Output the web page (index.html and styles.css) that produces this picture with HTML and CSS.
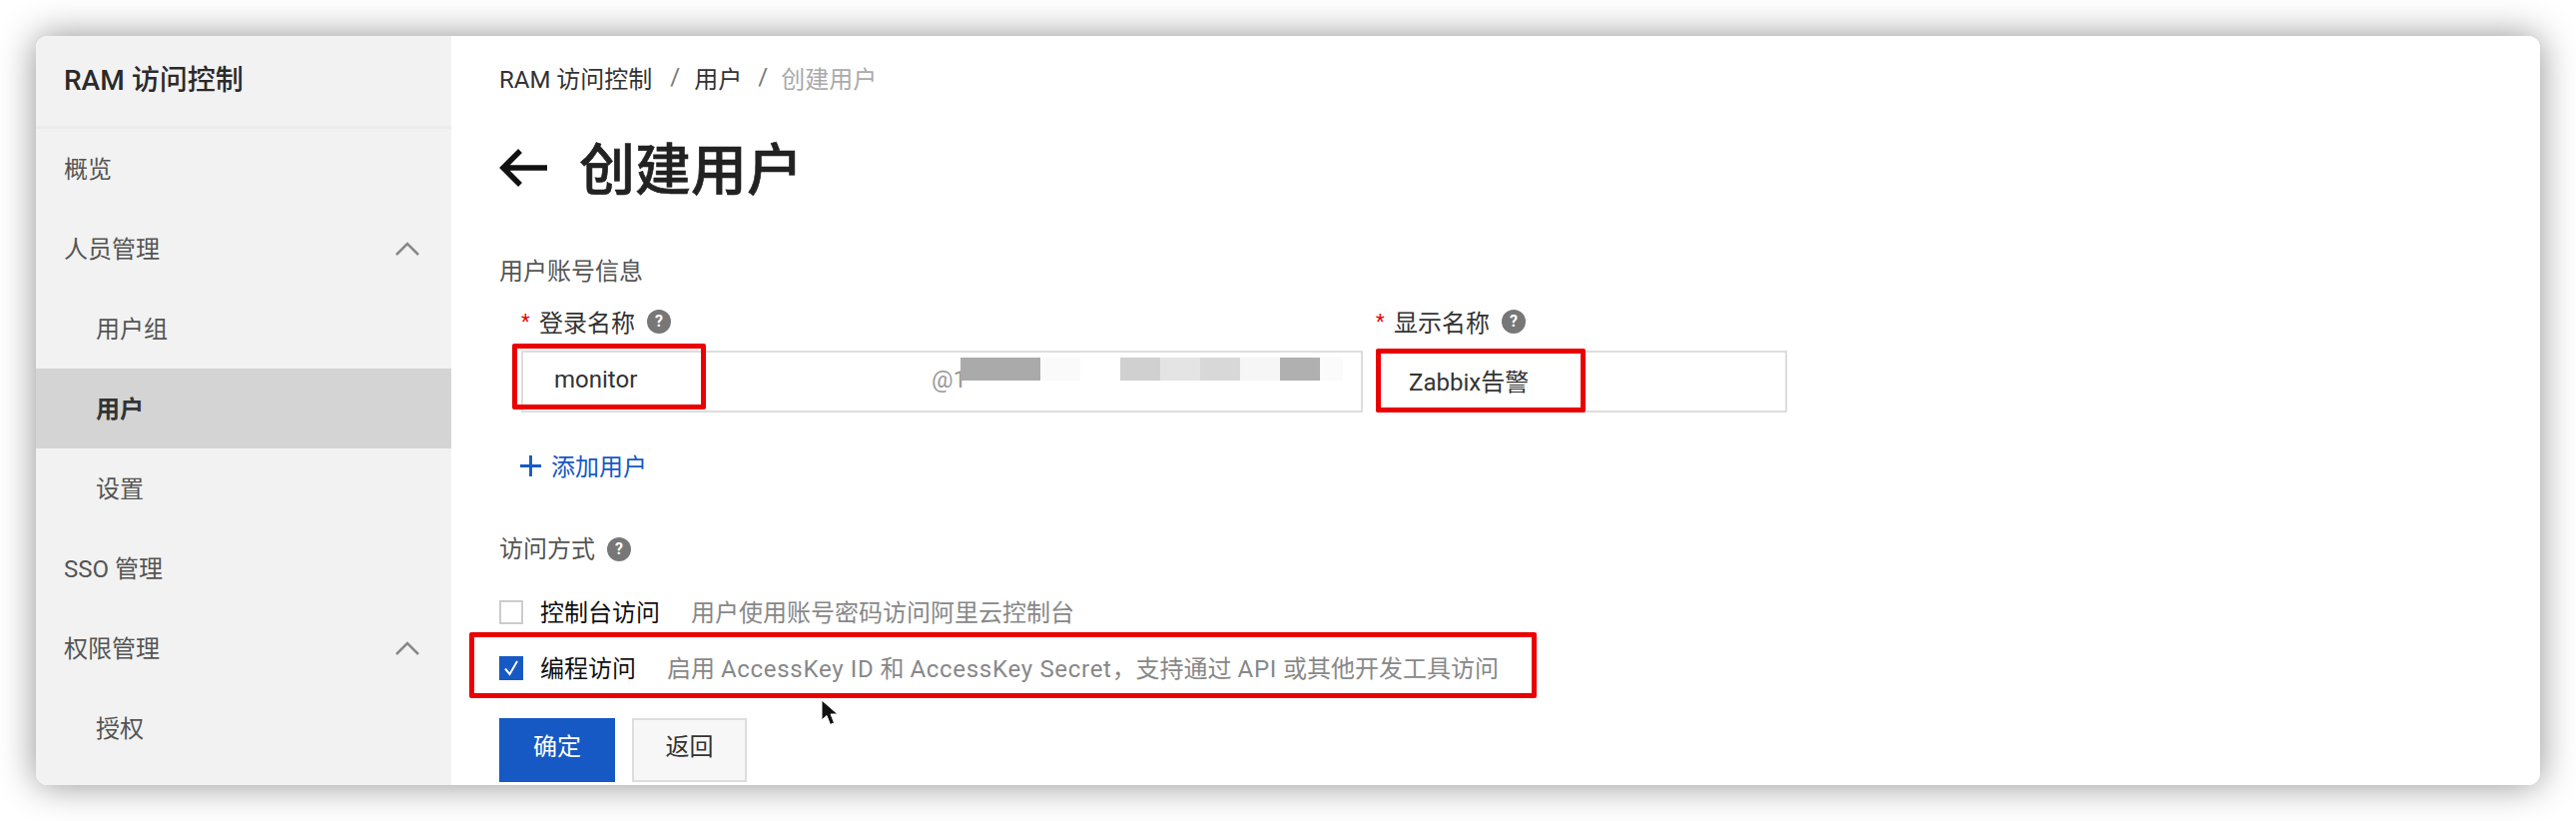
FILE: index.html
```html
<!DOCTYPE html>
<html lang="zh-CN">
<head>
    <meta charset="UTF-8">
    <title>创建用户 - RAM 访问控制</title>
    <link rel="stylesheet" href="styles.css">
</head>
<body>
    <div class="window">
        <!-- Sidebar -->
        <aside class="sidebar">
            <div class="sidebar-title">RAM 访问控制</div>
            <div class="nav-item">概览</div>
            <div class="nav-item">人员管理
                <svg class="chevron" viewBox="0 0 24 14"><path d="M1 13 12 2l11 11"/></svg>
            </div>
            <div class="nav-item nav-sub">用户组</div>
            <div class="nav-item nav-sub nav-active">用户</div>
            <div class="nav-item nav-sub">设置</div>
            <div class="nav-item">SSO 管理</div>
            <div class="nav-item">权限管理
                <svg class="chevron" viewBox="0 0 24 14"><path d="M1 13 12 2l11 11"/></svg>
            </div>
            <div class="nav-item nav-sub">授权</div>
        </aside>

        <!-- Main content -->
        <main class="main">
            <div class="breadcrumb">
                <span class="crumb-root">RAM 访问控制</span>
                <span class="crumb-sep crumb-sep-first">/</span>
                <span>用户</span>
                <span class="crumb-sep">/</span>
                <span class="crumb-current">创建用户</span>
            </div>

            <div class="page-title">
                <svg class="back-arrow" viewBox="0 0 48 38"><path d="M48 19H5M21 2 4 19l17 17"/></svg>
                <h1>创建用户</h1>
            </div>

            <div class="section-label">用户账号信息</div>

            <div class="fields">
                <div class="field field-login">
                    <div class="field-label"><span class="required">*</span><span class="label-text">登录名称</span><span class="help">?</span></div>
                    <div class="input">
                        <span class="input-name">monitor</span>
                        <span class="input-domain">@1</span>
                        <div class="mosaic">
                            <i class="m1"></i><i class="m1"></i><i class="m2"></i><i class="m3"></i><i class="m4"></i>
                            <i class="m5"></i><i class="m6"></i><i class="m7"></i><i class="m8"></i><i class="m9"></i>
                        </div>
                    </div>
                </div>
                <div class="field field-display">
                    <div class="field-label"><span class="required">*</span><span class="label-text">显示名称</span><span class="help">?</span></div>
                    <div class="input"><span class="input-name">Zabbix告警</span></div>
                </div>
            </div>

            <div class="add-user">
                <svg class="plus" viewBox="0 0 22 22"><path d="M11 0v22M0 11h22"/></svg>
                <span class="add-text">添加用户</span>
            </div>

            <div class="section-label access-label">访问方式<span class="help">?</span></div>

            <div class="check-row check-first">
                <span class="checkbox"></span>
                <span class="check-text">控制台访问</span>
                <span class="check-desc">用户使用账号密码访问阿里云控制台</span>
            </div>
            <div class="check-row check-second">
                <span class="checkbox checked">
                    <svg viewBox="0 0 24 24"><path d="M6 12.500 10.500 18 18 5"/></svg>
                </span>
                <span class="check-text">编程访问</span>
                <span class="check-desc">启用 <span class="latin">AccessKey ID</span> 和 <span class="latin">AccessKey Secret</span>，支持通过 <span class="latin">API</span> 或其他开发工具访问</span>
            </div>

            <div class="buttons">
                <button class="btn btn-primary">确定</button>
                <button class="btn">返回</button>
            </div>
        </main>

        <!-- Annotations drawn on top of the screenshot -->
        <div class="mark mark-name"></div>
        <div class="mark mark-display"></div>
        <div class="mark mark-api"></div>
        <svg class="cursor" viewBox="0 0 18 28">
            <path d="M1 1v20l5-4.500 3.500 9 4-1.700-3.500-8.800h7z"/>
        </svg>
    </div>
</body>
</html>
```

FILE: styles.css
```css
/* Screenshot of the RAM console, window floating on white */
* {
    box-sizing: border-box;
}

body {
    margin: 0;
    padding: 36px;
    height: 822px;
    overflow: hidden;
    background-color: #fff;
    font-family: Roboto, "Noto Sans CJK SC", sans-serif;
    font-size: 24px;
    color: #333;
}

.window {
    position: relative;
    display: flex;
    height: 750px;
    overflow: hidden;
    background: #fff;
    border-radius: 12px;
}

body::before {
    content: "";
    position: absolute;
    left: 36px;
    top: 36px;
    width: 2508px;
    height: 750px;
    border-radius: 12px;
    box-shadow: 0 0 36px rgba(0, 0, 0, 0.44);
}

/* Sidebar */
.sidebar {
    width: 416px;
    flex-shrink: 0;
    background-color: #f2f2f2;
}

.sidebar-title {
    height: 93px;
    padding: 0 0 6px 28px;
    display: flex;
    align-items: center;
    font-size: 28px;
    font-weight: 500;
    color: #2a2a2a;
    border-bottom: 3px solid #ececec;
}

.nav-item {
    position: relative;
    height: 80px;
    padding: 0 0 4px 28px;
    display: flex;
    align-items: center;
    color: #555;
}

.nav-sub {
    padding-left: 60px;
}

.nav-active {
    background-color: #d4d4d4;
    font-weight: 700;
    color: #333;
}

.chevron {
    position: absolute;
    left: 360px;
    top: 33px;
    width: 24px;
    height: 14px;
    fill: none;
    stroke: #888;
    stroke-width: 2.500;
}

/* Main */
.main {
    flex: 1;
    padding: 19px 48px 0;
}

.breadcrumb {
    height: 48px;
    padding-bottom: 4px;
    display: flex;
    align-items: center;
    gap: 16px;
}

.crumb-root {
    margin-right: 2px;
}

.crumb-sep {
    color: #777;
}

.crumb-sep-first {
    margin-right: -2px;
}

.crumb-current {
    margin-left: -3px;
    color: #aaa;
}

.page-title {
    margin-top: 25px;
    height: 80px;
    display: flex;
    align-items: center;
    gap: 32px;
}

.page-title h1 {
    margin: 0 0 6px;
    font-size: 56px;
    font-weight: 500;
    -webkit-text-stroke: 0.6px #222;
    color: #222;
}

.back-arrow {
    width: 48px;
    height: 38px;
    fill: none;
    stroke: #111;
    stroke-width: 5.500;
}

.section-label {
    margin-top: 48px;
    height: 32px;
    line-height: 32px;
    color: #555;
}

.fields {
    display: flex;
    gap: 13px;
    margin-top: 18px;
    padding-left: 22px;
}

.field-login {
    width: 843px;
}

.field-display {
    width: 412px;
}

.field-label {
    height: 32px;
    display: flex;
    align-items: center;
    color: #333;
}

.label-text {
    margin-bottom: 2px;
}

.required {
    width: 18px;
    color: #e00;
    font-size: 20px;
}

.help {
    display: inline-block;
    width: 24px;
    height: 24px;
    margin-left: 12px;
    border-radius: 50%;
    background-color: #777;
    color: #fff;
    font-size: 16px;
    font-weight: 700;
    line-height: 24px;
    text-align: center;
}

.input {
    position: relative;
    height: 62px;
    margin-top: 13px;
    padding: 0 0 4px 31px;
    display: flex;
    align-items: center;
    border: 2px solid #ddd;
}

.input-name {
    color: #333;
}

.input-domain {
    position: absolute;
    left: 409px;
    color: #999;
}

/* blurred out part of the domain */
.mosaic {
    position: absolute;
    left: 438px;
    top: 5px;
    display: flex;
}

.mosaic i {
    width: 40px;
    height: 23px;
}

.mosaic .m9 {
    width: 23px;
}

.m1 { background-color: #aaa; }
.m2 { background-color: #fafafa; }
.m3 { background-color: #fff; }
.m4 { background-color: #d0d0d0; }
.m5 { background-color: #e4e4e4; }
.m6 { background-color: #d8d8d8; }
.m7 { background-color: #f6f6f6; }
.m8 { background-color: #b0b0b0; }
.m9 { background-color: #fbfbfb; }

.add-user {
    margin-top: 37px;
    margin-left: 21px;
    height: 32px;
    display: flex;
    align-items: center;
    gap: 10px;
    color: #1659c4;
}

.add-text {
    margin-bottom: 2px;
}

.plus {
    width: 21px;
    height: 21px;
    fill: none;
    stroke: #1659c4;
    stroke-width: 3;
}

.access-label {
    margin-top: 52px;
    display: flex;
    align-items: center;
}

.check-row {
    height: 32px;
    display: flex;
    align-items: center;
}

.check-first {
    margin-top: 31px;
}

.check-second {
    margin-top: 24px;
}

.checkbox {
    width: 24px;
    height: 24px;
    margin-right: 17px;
    border: 2px solid #ccc;
    background: #fff;
}

.checked {
    border: none;
    background-color: #1659c4;
}

.checked svg {
    display: block;
    fill: none;
    stroke: #fff;
    stroke-width: 2;
}

.check-text {
    margin-bottom: 4px;
    color: #111;
}

.check-desc {
    margin-left: 31px;
    margin-bottom: 4px;
    color: #888;
}

.latin {
    letter-spacing: 0.7px;
}

.buttons {
    margin-top: 34px;
    display: flex;
    gap: 17px;
}

.btn {
    width: 115px;
    height: 64px;
    padding: 0 0 12px;
    border: 2px solid #ddd;
    background-color: #f7f7f7;
    font-family: inherit;
    font-size: 24px;
    color: #333;
}

.btn-primary {
    width: 116px;
    border: none;
    background-color: #1659c4;
    color: #fff;
}

/* Red annotation boxes */
.mark {
    position: absolute;
    border: 5px solid #eb0000;
    border-radius: 2px;
}

.mark-name {
    left: 477px;
    top: 308px;
    width: 194px;
    height: 66px;
}

.mark-display {
    left: 1342px;
    top: 313px;
    width: 210px;
    height: 64px;
}

.mark-api {
    left: 434px;
    top: 597px;
    width: 1069px;
    height: 66px;
}

.cursor {
    position: absolute;
    left: 786px;
    top: 664px;
    width: 18px;
    height: 28px;
    fill: #111;
    stroke: #fff;
    stroke-width: 1;
}
```
